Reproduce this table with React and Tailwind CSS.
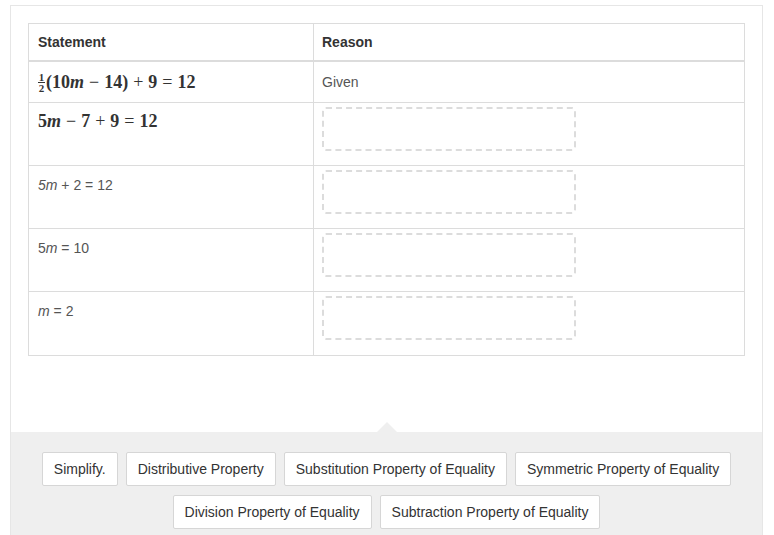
import React from "react";

const mathFont = { fontFamily: '"Liberation Serif", "DejaVu Serif", serif' };

function Op({ children }) {
  return <span className="mx-[5px] font-normal">{children}</span>;
}

function Dashed() {
  return (
    <div className="w-[254px] h-[44px] rounded-[4px] border-2 border-dashed border-[#dcdcdc]" />
  );
}

const rows = [
  {
    statement: (
      <span
        className="text-[18px] font-bold text-[#333] flex items-center"
        style={mathFont}
      >
        <span className="inline-flex flex-col items-center text-[11px] leading-[10px] mr-[1px]">
          <span>1</span>
          <span className="block w-[7px] border-t border-[#333]" />
          <span>2</span>
        </span>
        (10<i>m</i>
        <Op>−</Op>14)
        <Op>+</Op>9<Op>=</Op>12
      </span>
    ),
    reason: <span className="text-[14px] text-[#555]">Given</span>,
    h: "h-[41px]",
    center: true,
  },
  {
    statement: (
      <span className="text-[18px] font-bold text-[#333]" style={mathFont}>
        5<i>m</i>
        <Op>−</Op>7<Op>+</Op>9<Op>=</Op>12
      </span>
    ),
    h: "h-[63px]",
    pt: "pt-[5px]",
  },
  {
    statement: (
      <span className="text-[14px] text-[#555]">
        <i>5m</i> + 2 = 12
      </span>
    ),
    h: "h-[63px]",
  },
  {
    statement: (
      <span className="text-[14px] text-[#555]">
        5<i>m</i> = 10
      </span>
    ),
    h: "h-[63px]",
  },
  {
    statement: (
      <span className="text-[14px] text-[#555]">
        <i>m</i> = 2
      </span>
    ),
    h: "h-[63px]",
  },
];

const choices = [
  ["Simplify.", "Distributive Property", "Substitution Property of Equality", "Symmetric Property of Equality"],
  ["Division Property of Equality", "Subtraction Property of Equality"],
];

export default function App() {
  return (
    <div
      className="w-[774px] h-[535px] overflow-hidden bg-white pt-[5px] pl-[10px]"
      style={{ fontFamily: '"Liberation Sans", Arial, sans-serif' }}
    >
      <div className="w-[753px] border border-[#e6e6e6] bg-white">
        <div className="p-[17px] pb-0">
          <div className="border border-[#dcdcdc]">
            <div className="flex h-[38px] border-b-2 border-[#dcdcdc]">
              <div className="w-[285px] border-r border-[#dcdcdc] pl-[9px] flex items-center text-[14px] font-bold text-[#333]">
                Statement
              </div>
              <div className="flex-1 pl-[8px] flex items-center text-[14px] font-bold text-[#333]">
                Reason
              </div>
            </div>
            {rows.map((r, i) => (
              <div
                key={i}
                className={`flex ${r.h} ${i < rows.length - 1 ? "border-b border-[#dcdcdc]" : ""}`}
              >
                <div
                  className={`w-[285px] border-r border-[#dcdcdc] pl-[9px] flex ${
                    r.center ? "items-center" : `items-start ${r.pt || "pt-[9px]"}`
                  }`}
                >
                  {r.statement}
                </div>
                <div
                  className={`flex-1 pl-[8px] flex ${
                    r.reason ? "items-center" : "items-start pt-[4px]"
                  }`}
                >
                  {r.reason || <Dashed />}
                </div>
              </div>
            ))}
          </div>
        </div>

        <div className="h-[76px]" />

        <div className="relative bg-[#efefef] pt-[20px] pb-[20px]">
          <div className="absolute left-[366px] -top-[10px] w-0 h-0 border-l-[10px] border-r-[10px] border-b-[10px] border-l-transparent border-r-transparent border-b-[#efefef]" />
          <div className="flex flex-col items-center gap-[9px]">
            {choices.map((line, li) => (
              <div key={li} className="flex gap-[8px]">
                {line.map((c) => (
                  <button
                    key={c}
                    className="h-[34px] px-[11px] bg-white border border-[#d6d6d6] rounded-[2px] text-[14px] text-[#333]"
                  >
                    {c}
                  </button>
                ))}
              </div>
            ))}
          </div>
        </div>
      </div>
    </div>
  );
}
